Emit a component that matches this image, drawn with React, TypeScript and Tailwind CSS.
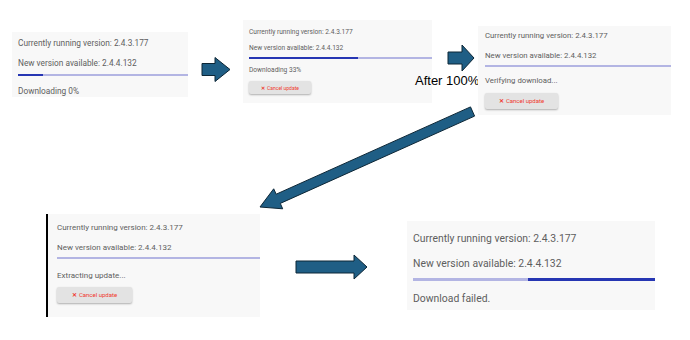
const font = { fontFamily: "Roboto, 'Liberation Sans', sans-serif" };

function Bar({ className, dark }: { className: string; dark?: string }) {
  return (
    <div className={`relative bg-[#b3b5e3] ${className}`}>
      {dark && <div className={`absolute top-0 h-full bg-[#2636b3] ${dark}`} />}
    </div>
  );
}

function CancelButton({ className }: { className: string }) {
  return (
    <div
      className={`flex items-center justify-center rounded-[2px] bg-[#e3e3e3] text-[#f03a2e] shadow-[0_1px_2px_rgba(0,0,0,0.3)] ${className}`}
    >
      <span className="mr-[2px] font-bold">✕</span>Cancel update
    </div>
  );
}

export default function App() {
  return (
    <div className="relative h-[340px] w-[690px] overflow-hidden bg-white text-[#5e5e5e]" style={font}>
      {/* step 1: downloading 0% */}
      <div className="absolute left-[12px] top-[32px] flex h-[65px] w-[176px] flex-col bg-[#f8f8f8] pl-[6px] pt-[6px] text-[8.3px] leading-[10px]">
        <div>Currently running version: 2.4.3.177</div>
        <div className="mt-[10px]">New version available: 2.4.4.132</div>
        <Bar className="mt-[6px] h-[2px]" dark="left-0 w-[25px]" />
        <div className="mt-[10px]">Downloading 0%</div>
      </div>

      {/* step 2: downloading 33% */}
      <div className="absolute left-[243px] top-[20px] flex h-[83px] w-[189px] flex-col bg-[#f8f8f8] pl-[6px] pt-[8px] text-[6.6px] leading-[8px]">
        <div>Currently running version: 2.4.3.177</div>
        <div className="mt-[8px]">New version available: 2.4.4.132</div>
        <Bar className="mt-[5px] h-[2px]" dark="left-0 w-[109px]" />
        <div className="mt-[7px]">Downloading 33%</div>
        <CancelButton className="mt-[7px] h-[13px] w-[62px] text-[5px]" />
      </div>

      {/* step 3: verifying */}
      <div className="absolute left-[415px] top-[73px] text-[13px] leading-[16px] text-black" style={{ fontFamily: "'Liberation Sans', Arial, sans-serif" }}>
        After 100%
      </div>
      <div className="absolute left-[478px] top-[26px] flex h-[89px] w-[193px] flex-col bg-[#f8f8f8] pl-[7px] pt-[5px] text-[7.8px] leading-[10px]">
        <div>Currently running version: 2.4.3.177</div>
        <div className="mt-[10px]">New version available: 2.4.4.132</div>
        <Bar className="mt-[4px] h-[2px]" />
        <div className="mt-[9px]">Verifying download...</div>
        <CancelButton className="mt-[7px] h-[16px] w-[73px] text-[6px]" />
      </div>

      {/* step 4: extracting */}
      <div className="absolute left-[46px] top-[214px] flex h-[103px] w-[214px] flex-col border-l-2 border-black bg-[#f8f8f8] pl-[9px] pt-[9px] text-[8px] leading-[10px]">
        <div>Currently running version: 2.4.3.177</div>
        <div className="mt-[10px]">New version available: 2.4.4.132</div>
        <Bar className="mt-[4px] h-[2px]" />
        <div className="mt-[12px]">Extracting update...</div>
        <CancelButton className="mt-[6px] h-[16px] w-[75px] text-[6px]" />
      </div>

      {/* step 5: failed */}
      <div className="absolute left-[407px] top-[221px] flex h-[89px] w-[248px] flex-col bg-[#f8f8f8] pl-[6px] pt-[11px] text-[10.4px] leading-[13px]">
        <div>Currently running version: 2.4.3.177</div>
        <div className="mt-[12px]">New version available: 2.4.4.132</div>
        <Bar className="mt-[8px] h-[3px]" dark="left-[115px] right-0" />
        <div className="mt-[11px]">Download failed.</div>
      </div>

      {/* arrows */}
      <svg className="pointer-events-none absolute left-0 top-0" width="690" height="340" viewBox="0 0 690 340">
        <g fill="#1f5e85" stroke="#0c2636" strokeWidth="1" strokeLinejoin="miter">
          <polygon points="202,63.5 215,63.5 215,57.5 230,69.5 215,81.5 215,75.5 202,75.5" />
          <polygon points="448,52 462,52 462,45 474,58 462,71 462,64 448,64" />
          <polygon points="470.5,106.9 276.2,194.2 273.7,188.8 260,207 282.7,208.8 280.3,203.4 474.6,116.1" />
          <polygon points="296,261 354,261 354,255 367,267 354,279 354,273 296,273" />
        </g>
      </svg>
    </div>
  );
}
